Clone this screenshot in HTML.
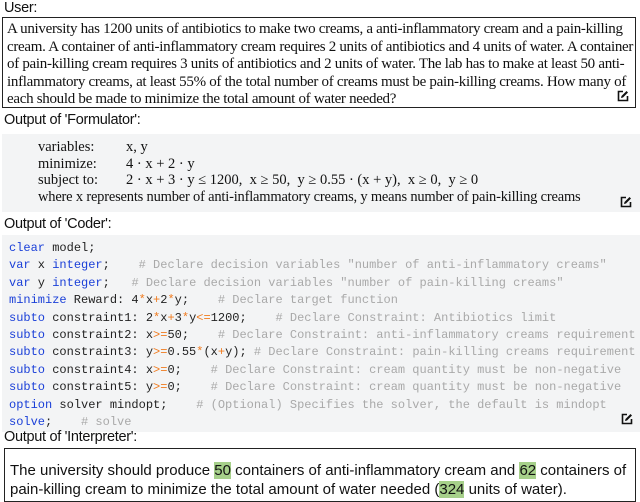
<!DOCTYPE html><html><head><style>
body{margin:0;width:640px;height:502px;background:#fff;position:relative;overflow:hidden;font-family:"Liberation Sans",sans-serif}
.a{position:absolute;white-space:nowrap}
.lbl{font-size:14.5px;color:#111;letter-spacing:-0.3px}
.ser{font-family:"Liberation Serif",serif;font-size:15px;color:#111}
.code{font-family:"Liberation Mono",monospace;font-size:12px;color:#222;white-space:pre}
.k{color:#1a3fd8}.c{color:#a9a9a9}.o{color:#f07b1f}
.ic{position:absolute;width:12px;height:12px}
.hl{background:#a6d08a}
</style></head><body>
<div class="a lbl" style="left:4px;top:0px">User:</div>
<div class="a" style="left:2px;top:17px;width:632px;height:89px;border:1.5px solid #222"></div>
<div class="a ser" style="left:7px;top:21px;line-height:17.6px;letter-spacing:-0.3px">A university has 1200 units of antibiotics to make two creams, a anti-inflammatory cream and a pain-killing<br>cream. A container of anti-inflammatory cream requires 2 units of antibiotics and 4 units of water. A container<br>of pain-killing cream requires 3 units of antibiotics and 2 units of water. The lab has to make at least 50 anti-<br>inflammatory creams, at least 55% of the total number of creams must be pain-killing creams. How many of<br>each should be made to minimize the total amount of water needed?</div>
<svg class="ic" style="left:617px;top:90px" viewBox="0 0 12 12"><path d="M6 1.5H1.5V10.5H10.5V6" fill="none" stroke="#111" stroke-width="1.6"/><path d="M4 8L4.5 6 9.5 1 11 2.5 6 7.5Z" fill="#111"/></svg>

<div class="a lbl" style="left:4px;top:112px">Output of 'Formulator':</div>
<div class="a" style="left:2px;top:134px;width:638px;height:78px;background:#f3f4f5"></div>
<div class="a ser" style="left:38px;top:139px;font-size:14.5px;line-height:16.5px">variables:<br>minimize:<br>subject to:</div>
<div class="a ser" style="left:38px;top:188.5px;font-size:14.5px;line-height:16.5px;letter-spacing:-0.2px">where x represents number of anti-inflammatory creams, y means number of pain-killing creams</div>
<div class="a ser" style="left:126px;top:139px;font-size:14.5px;line-height:16.5px">x, y<br>4 · x + 2 · y<br>2 · x + 3 · y ≤ 1200,&nbsp; x ≥ 50,&nbsp; y ≥ 0.55 · (x + y),&nbsp; x ≥ 0,&nbsp; y ≥ 0</div>
<svg class="ic" style="left:620px;top:196px" viewBox="0 0 12 12"><path d="M6 1.5H1.5V10.5H10.5V6" fill="none" stroke="#111" stroke-width="1.6"/><path d="M4 8L4.5 6 9.5 1 11 2.5 6 7.5Z" fill="#111"/></svg>

<div class="a lbl" style="left:4px;top:216px">Output of 'Coder':</div>
<div class="a" style="left:2px;top:235px;width:638px;height:197px;background:#f3f4f5"></div>
<div class="a code" style="left:9px;top:240px;line-height:17.4px"><span class="k">clear</span> model;
<span class="k">var</span> x <span class="k">integer</span>;    <span class="c"># Declare decision variables "number of anti-inflammatory creams"</span>
<span class="k">var</span> y <span class="k">integer</span>;   <span class="c"># Declare decision variables "number of pain-killing creams"</span>
<span class="k">minimize</span> Reward: 4<span class="o">*</span>x<span class="o">+</span>2<span class="o">*</span>y;    <span class="c"># Declare target function</span>
<span class="k">subto</span> constraint1: 2<span class="o">*</span>x<span class="o">+</span>3<span class="o">*</span>y<span class="o">&lt;=</span>1200;    <span class="c"># Declare Constraint: Antibiotics limit</span>
<span class="k">subto</span> constraint2: x<span class="o">&gt;=</span>50;    <span class="c"># Declare Constraint: anti-inflammatory creams requirement</span>
<span class="k">subto</span> constraint3: y<span class="o">&gt;=</span>0.55<span class="o">*</span>(x<span class="o">+</span>y); <span class="c"># Declare Constraint: pain-killing creams requirement</span>
<span class="k">subto</span> constraint4: x<span class="o">&gt;=</span>0;    <span class="c"># Declare Constraint: cream quantity must be non-negative</span>
<span class="k">subto</span> constraint5: y<span class="o">&gt;=</span>0;    <span class="c"># Declare Constraint: cream quantity must be non-negative</span>
<span class="k">option</span> solver mindopt;    <span class="c"># (Optional) Specifies the solver, the default is mindopt</span>
<span class="k">solve</span>;    <span class="c"># solve</span></div>
<svg class="ic" style="left:621px;top:413px" viewBox="0 0 12 12"><path d="M6 1.5H1.5V10.5H10.5V6" fill="none" stroke="#111" stroke-width="1.6"/><path d="M4 8L4.5 6 9.5 1 11 2.5 6 7.5Z" fill="#111"/></svg>

<div class="a lbl" style="left:4px;top:429px">Output of 'Interpreter':</div>
<div class="a" style="left:4px;top:448px;width:630px;height:52px;border:1.2px solid #222"></div>
<div class="a" style="left:10px;top:462px;font-size:15px;line-height:18.5px;color:#111">The university should produce <span class="hl">50</span> containers of anti-inflammatory cream and <span class="hl">62</span> containers of<br>pain-killing cream to minimize the total amount of water needed (<span class="hl">324</span> units of water).</div>
</body></html>
